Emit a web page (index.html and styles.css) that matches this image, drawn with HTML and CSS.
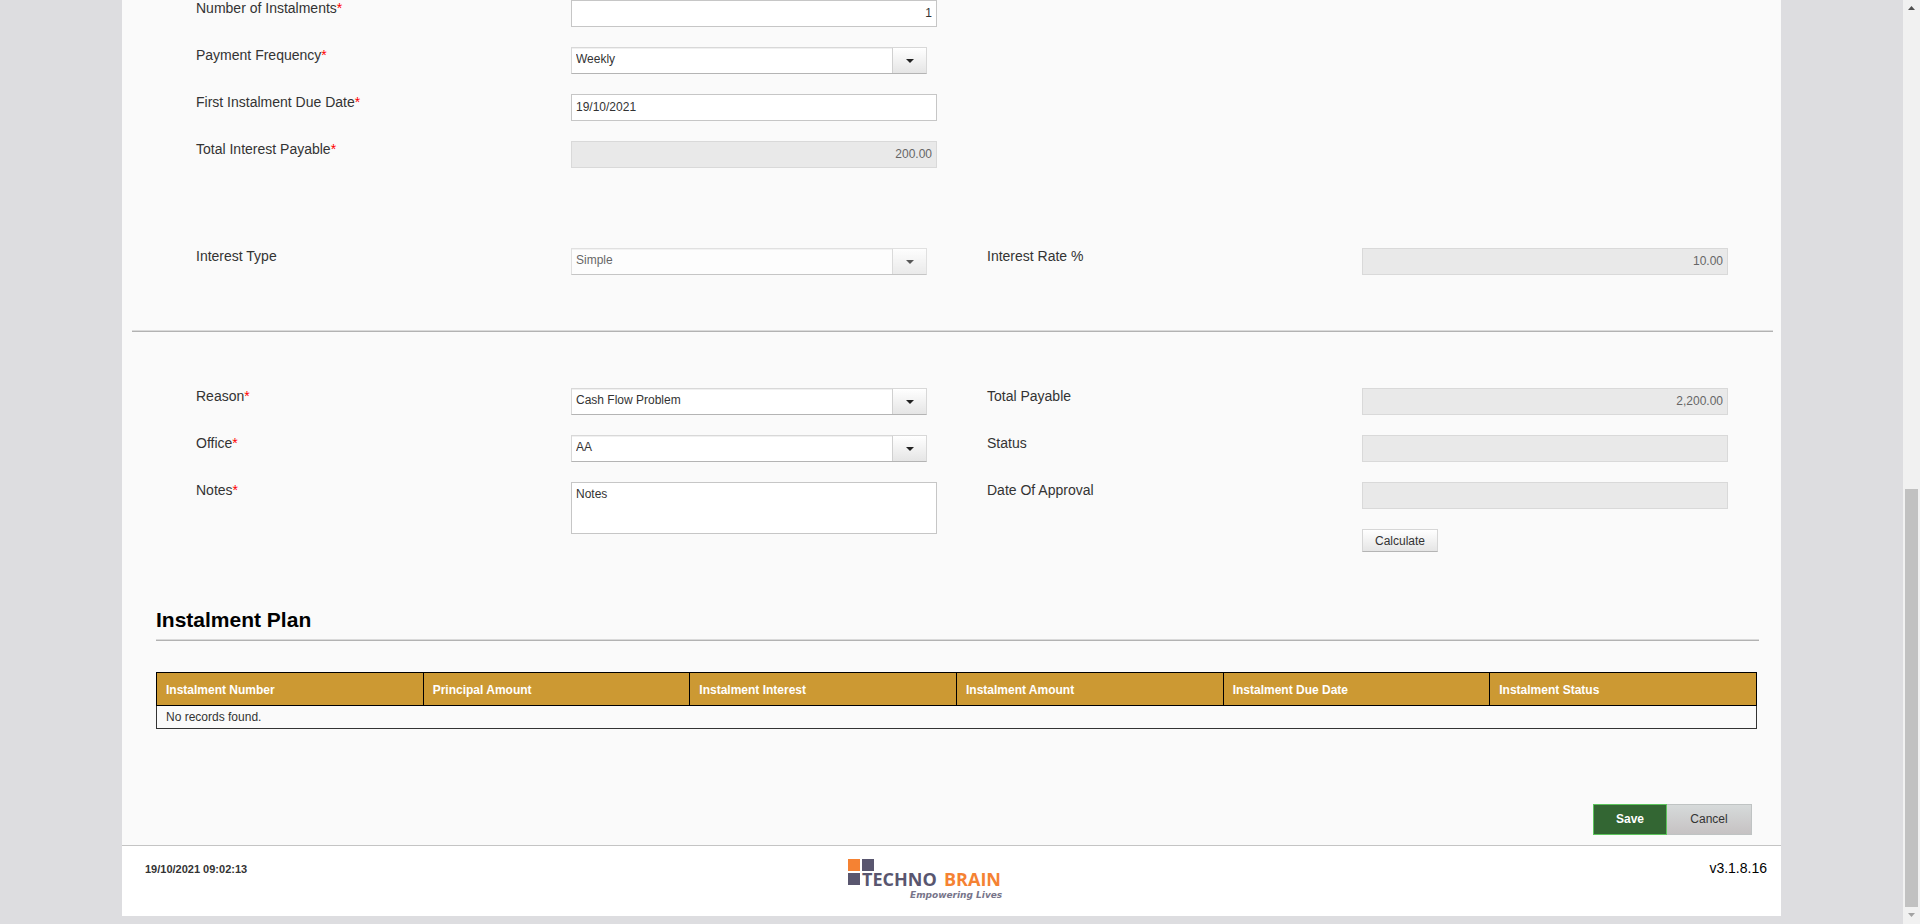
FILE: index.html
```html
<!DOCTYPE html>
<html lang="en">
<head>
<meta charset="utf-8">
<title>Instalment Plan</title>
<link rel="stylesheet" href="styles.css">
</head>
<body>
<div class="viewport">
  <main class="page">
    <form class="form">
      <section class="fields">
        <label class="label" for="count">Number of Instalments<span class="req">*</span></label>
        <div class="field"><input class="input num" id="count" type="text" value="1"></div>
        <label class="label first" for="freq">Payment Frequency<span class="req">*</span></label>
        <div class="field"><div class="combo"><select id="freq"><option>Weekly</option></select><span class="trigger"></span></div></div>
        <label class="label first" for="due">First Instalment Due Date<span class="req">*</span></label>
        <div class="field"><input class="input" id="due" type="text" value="19/10/2021"></div>
        <label class="label first" for="interest">Total Interest Payable<span class="req">*</span></label>
        <div class="field"><input class="input num" id="interest" type="text" value="200.00" disabled></div>
      </section>

      <section class="fields rate">
        <label class="label" for="type">Interest Type</label>
        <div class="field"><div class="combo off"><select id="type" disabled><option>Simple</option></select><span class="trigger"></span></div></div>
        <label class="label" for="rate">Interest Rate %</label>
        <div class="field"><input class="input num" id="rate" type="text" value="10.00" disabled></div>
      </section>

      <hr class="rule">

      <section class="fields details">
        <label class="label" for="reason">Reason<span class="req">*</span></label>
        <div class="field"><div class="combo"><select id="reason"><option>Cash Flow Problem</option></select><span class="trigger"></span></div></div>
        <label class="label" for="payable">Total Payable</label>
        <div class="field"><input class="input num" id="payable" type="text" value="2,200.00" disabled></div>

        <label class="label" for="office">Office<span class="req">*</span></label>
        <div class="field"><div class="combo"><select id="office"><option>AA</option></select><span class="trigger"></span></div></div>
        <label class="label" for="status">Status</label>
        <div class="field"><input class="input" id="status" type="text" disabled></div>

        <label class="label" for="notes">Notes<span class="req">*</span></label>
        <div class="field tall"><textarea class="input notes" id="notes">Notes</textarea></div>
        <label class="label" for="approval">Date Of Approval</label>
        <div class="field"><input class="input" id="approval" type="text" disabled></div>
        <div class="field last"><button class="calc" type="button">Calculate</button></div>
      </section>

      <section class="plan">
        <h2>Instalment Plan</h2>
        <hr class="rule">
        <table>
          <thead>
            <tr><th>Instalment Number</th><th>Principal Amount</th><th>Instalment Interest</th><th>Instalment Amount</th><th>Instalment Due Date</th><th>Instalment Status</th></tr>
          </thead>
          <tbody>
            <tr><td colspan="6">No records found.</td></tr>
          </tbody>
        </table>
      </section>

      <div class="actions">
        <button class="save" type="button">Save</button>
        <button class="cancel" type="button">Cancel</button>
      </div>
    </form>

    <footer class="footer">
      <time class="stamp">19/10/2021 09:02:13</time>
      <svg class="logo" width="160" height="44" viewBox="0 0 160 44" role="img" aria-label="Techno Brain">
        <rect x="2" y="1" width="12" height="12" fill="#f58233"/>
        <rect x="16" y="1" width="12" height="12" fill="#59566f"/>
        <rect x="2" y="15" width="12" height="12" fill="#59566f"/>
        <text class="brand" x="16" y="28" fill="#59566f">TECHNO</text>
        <text class="brand" x="98" y="28" fill="#f58233">BRAIN</text>
        <text class="tagline" x="64" y="40" fill="#77758a">Empowering Lives</text>
      </svg>
      <span class="version">v3.1.8.16</span>
    </footer>
  </main>
  <div class="scrollbar" aria-hidden="true">
    <svg class="arrow" width="17" height="17" viewBox="0 0 17 17"><path d="M5 10h7L8.500 6z" fill="#505050"/></svg>
    <div class="track"><div class="thumb"></div></div>
    <svg class="arrow" width="17" height="17" viewBox="0 0 17 17"><path d="M5 6h7L8.500 10z" fill="#a3a3a3"/></svg>
  </div>
</div>
</body>
</html>
```

FILE: styles.css
```css
* { box-sizing: border-box; }

body {
  margin: 0;
  background: #dddde0;
  color: #333;
  font-family: "Liberation Sans", Arial, sans-serif;
  font-size: 14px;
}

.viewport {
  display: flex;
  min-height: 100vh;
}

.page {
  flex: 1;
  margin: 0 122px 8px;
  background: #fff;
}

.form {
  background: #fafafa;
  border-bottom: 1px solid #c4c4c4;
  padding-bottom: 10px;
}

.fields {
  display: grid;
  grid-template-columns: 375fr 416fr 375fr 416fr;
  row-gap: 20px;
  align-items: start;
  padding: 0 3px 0 74px;
}

.rate { padding-top: 80px; padding-bottom: 55px; }
.details { padding-top: 56px; padding-bottom: 56px; }

.label { line-height: 16px; }
.first { grid-column: 1; }
.req { color: #f00; }
.field { padding-right: 50px; }
.tall { grid-row: 3 / span 2; grid-column: 2; }
.last { grid-column: 4; }

.input,
.combo select,
button {
  font: 12px/16px "Liberation Sans", Arial, sans-serif;
  color: #333;
  border-radius: 0;
}

.input {
  display: block;
  width: 100%;
  height: 27px;
  padding: 0 4px 2px;
  border: 1px solid #c6c6c6;
  background: #fff;
}

.num { text-align: right; }

.input:disabled {
  background: #e9e9e9;
  border-color: #d9d9d9;
  color: #666;
}

.notes {
  height: 52px;
  padding: 3px 4px;
  resize: none;
}

.combo {
  display: grid;
  margin-right: 10px;
}

.combo select {
  grid-area: 1 / 1;
  appearance: none;
  height: 27px;
  margin: 0;
  padding: 0 40px 3px 4px;
  border: 1px solid #d8d8d8;
  border-bottom-color: #b4b4b4;
  background: #fff;
  box-shadow: inset 0 1px #f0f0f0;
  opacity: 1;
}

.trigger {
  grid-area: 1 / 1;
  justify-self: end;
  display: grid;
  place-items: center;
  width: 34px;
  margin: 1px 1px 1px 0;
  border-left: 1px solid #d0d0d0;
  background: linear-gradient(#fff, #e5e5e5);
  pointer-events: none;
}

.trigger::after {
  content: "";
  border: 4px solid transparent;
  border-top-color: #222;
  border-bottom: 0;
}

.off { opacity: 0.75; }

.rule {
  height: 2px;
  margin: 0 8px 0 10px;
  border: 0;
  border-top: 1px solid #dadada;
  border-bottom: 1px solid #b2b2b2;
}

.calc {
  display: block;
  height: 23px;
  padding: 0 12px;
  border: 1px solid #d6d6d6;
  border-bottom-color: #b4b4b4;
  background: linear-gradient(#fff, #e5e5e5);
}

.plan { padding: 0 22px 0 34px; }

.plan h2 {
  margin: 0;
  padding-bottom: 7px;
  color: #000;
  font-size: 21px;
  line-height: 24px;
}

.plan .rule { margin: 0 0 31px; }

table {
  width: calc(100% - 2px);
  border-collapse: collapse;
  table-layout: fixed;
  font-size: 12px;
}

th {
  height: 33px;
  padding: 2px 9px 0;
  border: 1px solid #000;
  background: #cc9933;
  color: #fff;
  text-align: left;
}

td {
  height: 23px;
  padding: 0 9px;
  border: 1px solid #333;
}

.actions {
  display: flex;
  justify-content: flex-end;
  padding: 75px 29px 0 0;
}

.actions button {
  height: 31px;
  padding: 0 0 2px;
  border: 1px solid #bfc3c3;
}

.actions .save {
  width: 74px;
  border-color: #5cc45c;
  background: #336633;
  color: #fff;
  font-weight: bold;
}

.actions .cancel {
  width: 85px;
  border-left: 0;
  background: linear-gradient(#d6dada, #c6c2c3);
}

.footer {
  display: grid;
  grid-template-columns: 13fr 16fr 1fr;
  align-items: start;
  padding: 12px 14px 14px 23px;
}

.stamp {
  padding-top: 3px;
  font-size: 11px;
  font-weight: bold;
  line-height: 16px;
}

.version {
  padding-top: 2px;
  color: #000;
  line-height: 16px;
}

.brand { font: bold 18px "Open Sans", sans-serif; }
.tagline { font: italic bold 9px "DejaVu Sans", sans-serif; }

.scrollbar {
  display: flex;
  flex-direction: column;
  width: 17px;
  background: #f1f1f1;
}

.track {
  flex: 1;
  display: flex;
  align-items: flex-end;
  padding: 0 2px;
}

.thumb {
  width: 100%;
  height: 47%;
  background: #c1c1c1;
}

.arrow { display: block; }
```
